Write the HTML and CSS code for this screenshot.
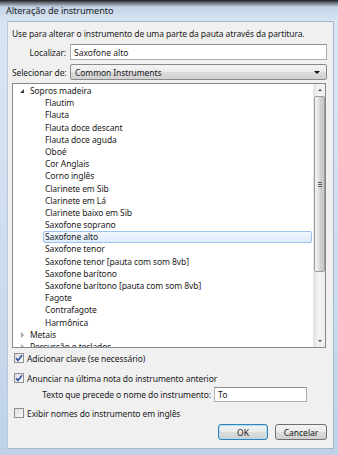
FILE: index.html
```html
<!DOCTYPE html>
<html>
<head>
  <meta charset="UTF-8">
  <title>Alteração de instrumento</title>
  <link rel="stylesheet" href="styles.css">
</head>
<body>
  <div class="window">
    <div class="titlebar">Alteração de instrumento</div>
    <div class="client">
      <p class="intro">Use para alterar o instrumento de uma parte da pauta através da partitura.</p>

      <div class="field-row">
        <label class="field-label" for="find">Localizar:</label>
        <input class="textbox" id="find" type="text" value="Saxofone alto">
      </div>
      <div class="field-row">
        <span class="field-label">Selecionar de:</span>
        <div class="combo">
          <span>Common Instruments</span>
          <span class="combo-arrow"></span>
        </div>
      </div>

      <!-- instrument tree with its own scrollbar -->
      <div class="tree">
        <ul class="tree-items">
          <li class="group"><span class="twisty open"></span>Sopros madeira</li>
          <li class="leaf">Flautim</li>
          <li class="leaf">Flauta</li>
          <li class="leaf">Flauta doce descant</li>
          <li class="leaf">Flauta doce aguda</li>
          <li class="leaf">Oboé</li>
          <li class="leaf">Cor Anglais</li>
          <li class="leaf">Corno inglês</li>
          <li class="leaf">Clarinete em Sib</li>
          <li class="leaf">Clarinete em Lá</li>
          <li class="leaf">Clarinete baixo em Sib</li>
          <li class="leaf">Saxofone soprano</li>
          <li class="leaf selected">Saxofone alto</li>
          <li class="leaf">Saxofone tenor</li>
          <li class="leaf">Saxofone tenor [pauta com som 8vb]</li>
          <li class="leaf">Saxofone barítono</li>
          <li class="leaf">Saxofone barítono [pauta com som 8vb]</li>
          <li class="leaf">Fagote</li>
          <li class="leaf">Contrafagote</li>
          <li class="leaf">Harmônica</li>
          <li class="group"><span class="twisty closed"></span>Metais</li>
          <li class="group"><span class="twisty closed"></span>Percussão e teclados</li>
        </ul>
        <div class="scrollbar">
          <div class="scroll-btn"><span class="arrow-up"></span></div>
          <div class="scroll-track">
            <div class="scroll-thumb"><span class="grip"></span></div>
          </div>
          <div class="scroll-btn"><span class="arrow-down"></span></div>
        </div>
      </div>

      <label class="check check-first"><span class="box"><svg viewBox="0 0 8 8" width="8" height="8"><path d="M1 4.2 L3 6.4 L7 1.2" fill="none" stroke="#2a4fa8" stroke-width="1.6"/></svg></span>Adicionar clave (se necessário)</label>
      <label class="check"><span class="box"><svg viewBox="0 0 8 8" width="8" height="8"><path d="M1 4.2 L3 6.4 L7 1.2" fill="none" stroke="#2a4fa8" stroke-width="1.6"/></svg></span>Anunciar na última nota do instrumento anterior</label>
      <div class="prefix-row">
        <span>Texto que precede o nome do instrumento:</span>
        <input class="textbox prefix" type="text" value="To">
      </div>
      <label class="check check-last"><span class="box"></span>Exibir nomes do instrumento em inglês</label>

      <div class="buttons">
        <button class="btn default">OK</button>
        <button class="btn">Cancelar</button>
      </div>
    </div>
  </div>
</body>
</html>
```

FILE: styles.css
```css
body {
  margin: 0;
  font-family: "Noto Sans", sans-serif;
  font-size: 8.5px;
  letter-spacing: -0.1px;
  color: #1b1b1b;
}
.window {
  width: 338px;
  height: 455px;
  box-sizing: border-box;
  padding: 0 4px 6px 7px;
  background: linear-gradient(#1c1c1c 0, #6f7680 3px, #c4d5e8 7px, #d9e5f3 22px, #cddcee 60%, #bfd2ea 100%);
  display: flex;
  flex-direction: column;
}
.titlebar {
  height: 21px;
  line-height: 21px;
  margin-left: -1px;
  font-size: 9.2px;
  color: #1e1e1e;
}
.client {
  flex: 1;
  background: #f0f0f0;
  border: 1px solid #a6b6c9;
  border-left-color: #b9c9db;
  padding: 0 6px 0 4px;
  display: flex;
  flex-direction: column;
}
.intro {
  margin: 6px 0 0 0;
  height: 12px;
  line-height: 12px;
  white-space: nowrap;
}
.field-row {
  display: flex;
  align-items: center;
  margin-top: 4px;
}
.field-label {
  width: 58px;
  box-sizing: border-box;
  text-align: right;
  padding-right: 4px;
  white-space: nowrap;
}
.textbox {
  box-sizing: border-box;
  height: 16px;
  border: 1px solid #abadb3;
  border-top-color: #8e9298;
  background: #fff;
  font: inherit;
  padding: 0 3px;
  margin: 0;
  color: #1b1b1b;
  outline: none;
}
.field-row .textbox {
  flex: 1;
}
.combo {
  flex: 1;
  box-sizing: border-box;
  height: 16px;
  border: 1px solid #8a8a8a;
  border-radius: 2px;
  background: linear-gradient(#f4f4f4 0, #ebebeb 50%, #dcdcdc 51%, #d2d2d2 100%);
  display: flex;
  align-items: center;
  justify-content: space-between;
  padding: 0 6px 0 4px;
}
.combo-arrow {
  width: 0;
  height: 0;
  border-left: 3px solid transparent;
  border-right: 3px solid transparent;
  border-top: 3px solid #111;
}
.tree {
  margin-top: 3px;
  height: 265px;
  flex: none;
  box-sizing: border-box;
  border: 1px solid #828790;
  background: #fff;
  display: flex;
  overflow: hidden;
  margin-right: 1px;
}
.tree-items {
  list-style: none;
  margin: 0;
  padding: 1px 1px 0 0;
  flex: 1;
  overflow: hidden;
}
.tree-items li {
  height: 12.2px;
  line-height: 12.2px;
  white-space: nowrap;
  box-sizing: border-box;
}
.group {
  padding-left: 7px;
  display: flex;
  align-items: center;
}
.leaf {
  padding-left: 32px;
}
.leaf.selected {
  margin-left: 30px;
  padding-left: 1px;
  border: 1px solid #9cc3ee;
  border-radius: 2px;
  background: linear-gradient(#f3f8fe, #deebfb);
  line-height: 10.2px;
}
.twisty {
  width: 6px;
  height: 6px;
  margin-right: 4px;
  position: relative;
}
.twisty.open::before {
  content: "";
  position: absolute;
  left: 0;
  top: 1px;
  border-left: 4px solid transparent;
  border-bottom: 4px solid #3b3b3b;
}
.twisty.closed::before {
  content: "";
  position: absolute;
  left: 1px;
  top: 0;
  border-top: 3px solid transparent;
  border-bottom: 3px solid transparent;
  border-left: 3px solid #a6a6a6;
}
.scrollbar {
  width: 11px;
  display: flex;
  flex-direction: column;
  background: linear-gradient(90deg, #e3e3e3, #f3f3f3 40%, #eeeeee);
  border-left: 1px solid #e6e6e6;
}
.scroll-btn {
  height: 12px;
  display: flex;
  align-items: center;
  justify-content: center;
}
.arrow-up {
  border-left: 2px solid transparent;
  border-right: 2px solid transparent;
  border-bottom: 2px solid #4a4a4a;
}
.arrow-down {
  border-left: 2px solid transparent;
  border-right: 2px solid transparent;
  border-top: 2px solid #4a4a4a;
}
.scroll-track {
  flex: 1;
}
.scroll-thumb {
  height: 176px;
  box-sizing: border-box;
  border: 1px solid #9b9b9b;
  border-radius: 2px;
  background: linear-gradient(90deg, #f2f2f2, #e2e2e2 45%, #d0d0d0 55%, #c9c9c9);
  display: flex;
  align-items: center;
  justify-content: center;
}
.grip {
  width: 4px;
  height: 5px;
  background: repeating-linear-gradient(#5f5f5f 0, #5f5f5f 1px, transparent 1px, transparent 2px);
}
.check {
  display: flex;
  align-items: center;
  height: 12px;
  margin-left: 2px;
  margin-top: 8px;
  white-space: nowrap;
}
.check-first {
  margin-top: 4px;
}
.check-last {
  margin-top: 5px;
}
.box {
  width: 10px;
  height: 10px;
  box-sizing: border-box;
  border: 1px solid #8e8f8f;
  background: linear-gradient(135deg, #dcdcdc, #fbfbfb);
  margin-right: 3px;
  display: flex;
  align-items: center;
  justify-content: center;
}
.prefix-row {
  display: flex;
  align-items: center;
  justify-content: flex-end;
  margin-top: 3px;
  padding-right: 20px;
  white-space: nowrap;
}
.prefix-row span {
  margin-right: 3px;
}
.textbox.prefix {
  width: 93px;
  height: 15px;
}
.buttons {
  display: flex;
  justify-content: flex-end;
  gap: 7px;
  margin-top: 5px;
}
.btn {
  height: 16px;
  box-sizing: border-box;
  border: 1px solid #707070;
  border-radius: 3px;
  background: linear-gradient(#f2f2f2 0, #ebebeb 50%, #dddddd 51%, #cfcfcf 100%);
  font: inherit;
  color: #1b1b1b;
  padding: 0;
  margin: 0;
}
.btn.default {
  width: 50px;
  border-color: #3c7fb1;
  box-shadow: inset 0 0 0 1px #a6e0fa;
}
.btn + .btn {
  width: 52px;
}
```
